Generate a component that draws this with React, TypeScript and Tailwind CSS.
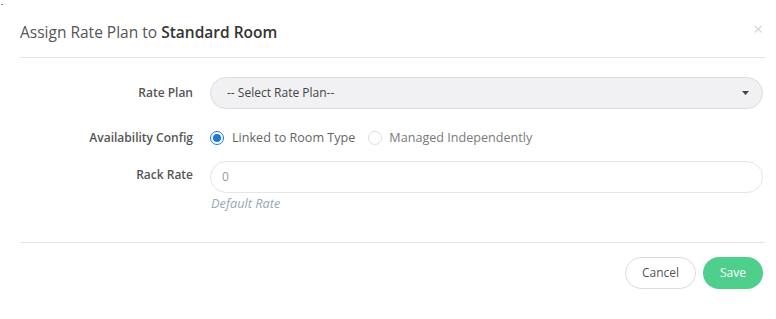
import React from "react";

export default function App() {
  return (
    <div className="w-[776px] h-[319px] bg-white relative overflow-hidden" style={{ fontFamily: '"Open Sans", "Noto Sans", sans-serif' }}>
      <div className="absolute left-[1px] top-[4px] w-[2px] h-[1px] bg-[#888]" />
      {/* Header */}
      <div className="ml-[20px] mr-[11px] h-[58px] border-b border-[#e5e5e5] flex items-center justify-between">
        <div className="text-[15.5px] text-[#555] pt-[9px]">
          Assign Rate Plan to <span className="font-semibold text-[#333]">Standard Room</span>
        </div>
        <div className="text-[#c4c4c4] text-[17px] leading-none mr-[2px] mb-[0px] font-light">×</div>
      </div>

      {/* Body */}
      <div className="ml-[20px] mr-[13px] pt-[19px] flex flex-col">
        <div className="flex items-center h-[32px]">
          <div className="w-[173px] text-right text-[12px] font-semibold text-[#555]">Rate Plan</div>
          <div className="ml-[17px] flex-1 h-[32px] rounded-full border border-[#dcdcdf] bg-[#f1f1f3] flex items-center justify-between pl-[16px] pr-[12px]">
            <span className="text-[12px] text-[#444]">-- Select Rate Plan--</span>
            <svg width="7" height="4" viewBox="0 0 7 4" className="mr-[1px]"><path d="M0 0 L7 0 L3.5 4 Z" fill="#444" /></svg>
          </div>
        </div>

        <div className="flex items-center h-[22px] mt-[18px]">
          <div className="w-[173px] text-right text-[12px] font-semibold text-[#555]">Availability Config</div>
          <div className="ml-[17px] flex items-center">
            <span className="w-[14px] h-[14px] rounded-full border-[1.5px] border-[#1a7ad9] flex items-center justify-center">
              <span className="w-[8px] h-[8px] rounded-full bg-[#1a7ad9]" />
            </span>
            <span className="ml-[8px] text-[12.6px] text-[#666]">Linked to Room Type</span>
            <span className="ml-[13px] w-[14px] h-[14px] rounded-full border border-[#dedede]" />
            <span className="ml-[7px] text-[12.6px] text-[#7a7a7a]">Managed Independently</span>
          </div>
        </div>

        <div className="flex items-center h-[32px] mt-[12px]">
          <div className="w-[173px] text-right text-[12px] font-semibold text-[#555] mb-[4px]">Rack Rate</div>
          <div className="ml-[17px] flex-1 h-[32px] rounded-full border border-[#e6e6e6] bg-white flex items-center pl-[11px]">
            <span className="text-[12px] text-[#999]">0</span>
          </div>
        </div>
        <div className="ml-[190px] pl-[1px] text-[12.8px] italic text-[#9aa8b5] mt-[1px]">Default Rate</div>
      </div>

      {/* Footer */}
      <div className="ml-[20px] mr-[11px] mt-[29px] border-t border-[#e5e5e5]" />
      <div className="mr-[13px] mt-[14px] flex justify-end gap-[7px]">
        <button className="h-[32px] w-[71px] rounded-full border border-[#dcdcdc] bg-white text-[12px] text-[#555]">Cancel</button>
        <button className="h-[32px] w-[60px] rounded-full bg-[#4fcf8c] text-[12px] text-white">Save</button>
      </div>
    </div>
  );
}
